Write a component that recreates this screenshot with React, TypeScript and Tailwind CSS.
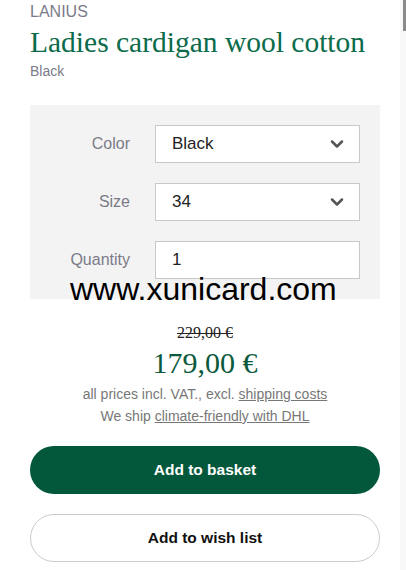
import { ChevronDown } from "lucide-react";

const sans = "font-['Liberation_Sans',Arial,sans-serif]";
const serif = "font-['Liberation_Serif','Times_New_Roman',serif]";

function SelectBox({ value }: { value: string }) {
  return (
    <div className="flex h-[38px] flex-1 items-center justify-between border border-[#c8c8c8] bg-white pl-4 pr-3">
      <span className="text-[17px] text-[#222]">{value}</span>
      <ChevronDown className="h-5 w-5 text-[#555]" strokeWidth={3} />
    </div>
  );
}

function Row({ label, children }: { label: string; children: React.ReactNode }) {
  return (
    <div className="flex items-center">
      <span className="w-[100px] text-right text-[16px] text-[#7b7b88]">{label}</span>
      <div className="ml-[25px] flex flex-1">{children}</div>
    </div>
  );
}

export default function App() {
  return (
    <div className={`relative h-[570px] w-[406px] overflow-hidden bg-white ${sans}`}>
      <div className="w-[400px] pl-[30px] pr-[20px]">
        <p className="pt-[2px] text-[16px] leading-[20px] text-[#7b7b88]">LANIUS</p>
        <h1 className={`${serif} mt-[2px] text-[29.5px] leading-[36px] text-[#0b6b4a]`}>
          Ladies cardigan wool cotton
        </h1>
        <p className="mt-[2px] text-[14px] leading-[18px] text-[#7b7b88]">Black</p>

        <div className="relative mt-[25px] flex flex-col gap-[20px] bg-[#f3f3f3] pb-[20px] pr-[20px] pt-[20px]">
          <Row label="Color">
            <SelectBox value="Black" />
          </Row>
          <Row label="Size">
            <SelectBox value="34" />
          </Row>
          <Row label="Quantity">
            <div className="flex h-[38px] flex-1 items-center border border-[#c8c8c8] bg-white pl-4">
              <span className="text-[17px] text-[#222]">1</span>
            </div>
          </Row>
          <span className="absolute left-[40px] top-[166px] text-[32px] leading-[36px] text-black">
            www.xunicard.com
          </span>
        </div>

        <div className="mt-[24px] flex flex-col items-center">
          <span className={`${serif} text-[16px] leading-[20px] text-[#222] line-through`}>229,00 €</span>
          <span className={`${serif} mt-[2px] text-[30px] leading-[36px] text-[#0b5a3d]`}>179,00 €</span>
          <p className="mt-[2px] text-[14px] leading-[22px] text-[#777]">
            all prices incl. VAT., excl. <span className="underline">shipping costs</span>
          </p>
          <p className="text-[14px] leading-[22px] text-[#777]">
            We ship <span className="underline">climate-friendly with DHL</span>
          </p>
        </div>

        <button className="mt-[19px] flex h-[48px] w-full items-center justify-center rounded-full bg-[#03573a] text-[15.5px] font-bold text-white">
          Add to basket
        </button>
        <button className="mt-[20px] flex h-[48px] w-full items-center justify-center rounded-full border border-[#cccccc] bg-white text-[15.5px] font-bold text-[#111]">
          Add to wish list
        </button>
      </div>

      <div className="absolute right-0 top-0 h-full w-[6px] bg-[#f8f8f8]">
        <div className="ml-auto h-[31px] w-[3px] bg-[#8a8a8a]" />
      </div>
    </div>
  );
}
